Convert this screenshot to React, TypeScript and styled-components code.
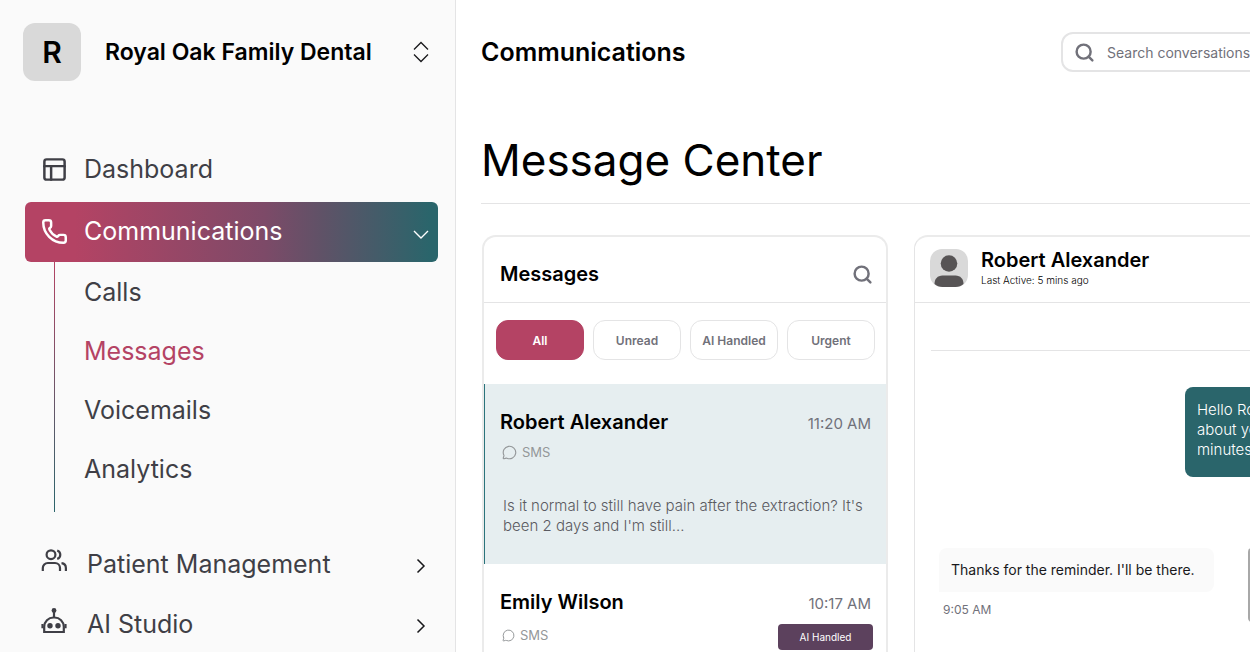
import React from "react";
import styled, { createGlobalStyle } from "styled-components";
import { MessageCircle, PanelsTopLeft, Phone, Search } from "lucide-react";

const color = {
  rose: "#b44364",
  teal: "#2a656b",
  plum: "#5c415d",
  ink: "#3f3f46",
  muted: "#71717a",
  line: "#e4e4e5",
  edge: "#ebebeb",
};

const GlobalStyle = createGlobalStyle`
  *, *::before, *::after { box-sizing: border-box; }
  body {
    margin: 0;
    background: #fff;
    color: #000;
    font-family: Inter, "Liberation Sans", sans-serif;
  }
  h1, h2, h3, p, ul { margin: 0; padding: 0; }
  ul { list-style: none; }
  button { font-family: inherit; cursor: pointer; }
  a { color: inherit; text-decoration: none; }
  svg { display: block; flex: none; }
`;

const Shell = styled.div`
  display: flex;
  height: 100vh;
  overflow: hidden;
`;

/* Sidebar */

const Sidebar = styled.aside`
  flex: none;
  width: 456px;
  background: #fafafa;
  border-right: 1px solid ${color.line};
`;

const Practice = styled.button`
  display: flex;
  align-items: center;
  width: 100%;
  padding: 23px 26px 0 23px;
  border: 0;
  background: none;
  color: #000;
  text-align: left;
`;

const Initial = styled.span`
  display: grid;
  place-items: center;
  width: 58px;
  height: 58px;
  border-radius: 12px;
  background: #d9d9d9;
  font-size: 30px;
  font-weight: 600;
`;

const PracticeName = styled.span`
  flex: 1;
  margin-left: 24px;
  font-size: 23px;
  font-weight: 600;
  white-space: nowrap;
`;

const Nav = styled.nav`
  padding: 58px 17px 0 25px;
`;

const NavItem = styled.a<{ $active?: boolean }>`
  display: flex;
  align-items: center;
  gap: 16px;
  height: 60px;
  padding: 0 9px 0 16px;
  padding-bottom: ${(p) => (p.$active ? "2px" : 0)};
  margin-bottom: ${(p) => (p.$active ? 0 : "3px")};
  border-radius: 6px;
  color: ${(p) => (p.$active ? "#fff" : color.ink)};
  background: ${(p) =>
    p.$active
      ? `linear-gradient(90deg, ${color.rose} 12%, #7d4a68 58%, #5f5267 72%, ${color.teal} 98%)`
      : "none"};
  font-size: 25px;
`;

const NavLabel = styled.span`
  flex: 1;
  white-space: nowrap;
`;

const SubList = styled.ul`
  margin: 0 0 22px 29px;
  padding: 0 0 14px 29px;
  border-left: 1px solid;
  border-image: linear-gradient(${color.rose}, ${color.teal}) 1;
`;

const SubLink = styled.a<{ $active?: boolean }>`
  display: flex;
  align-items: center;
  height: 59px;
  font-size: 25px;
  color: ${(p) => (p.$active ? color.rose : color.ink)};
`;

const NavGroup = styled.div`
  display: flex;
  flex-direction: column;
`;

const GroupItem = styled(NavItem)`
  gap: 20px;
  margin-bottom: 0;
`;

/* Main area */

const Main = styled.main`
  flex: 1;
  min-width: 0;
  overflow: hidden;
`;

const Workspace = styled.div`
  width: calc(100% + 200px);
  min-height: 100%;
  display: flex;
  flex-direction: column;
  padding: 32px 24px 0 25px;
`;

const TopBar = styled.header`
  display: flex;
  align-items: center;
  justify-content: space-between;
  height: 40px;
`;

const Section = styled.h2`
  font-size: 25px;
  font-weight: 600;
`;

const SearchBox = styled.label`
  display: flex;
  align-items: center;
  gap: 12px;
  width: 365px;
  height: 40px;
  padding: 0 11px;
  border: 2px solid ${color.line};
  border-radius: 12px;
  color: ${color.muted};
`;

const SearchInput = styled.input`
  flex: 1;
  min-width: 0;
  padding: 0;
  border: 0;
  outline: 0;
  background: none;
  font-family: inherit;
  font-size: 14px;
  color: ${color.ink};
  &::placeholder { color: ${color.muted}; opacity: 1; }
`;

const PageTitle = styled.h1`
  margin-top: 59px;
  padding-bottom: 14px;
  border-bottom: 1px solid ${color.line};
  font-size: 44px;
  line-height: 58px;
  font-weight: 400;
`;

const Columns = styled.div`
  flex: 1;
  display: grid;
  grid-template-columns: 406px minmax(0, 1fr);
  gap: 26px;
  margin-top: 31px;
  padding-left: 1px;
`;

const Card = styled.section`
  border: 2px solid ${color.edge};
  border-bottom: 0;
  border-radius: 14px 14px 0 0;
`;

const ThreadCard = styled(Card)`
  border-left: 1px solid ${color.line};
`;

const CardHeader = styled.header`
  display: flex;
  align-items: center;
  height: 66px;
  padding: 0 13px 0 16px;
  border-bottom: 1px solid ${color.line};
`;

const ContactHeader = styled(CardHeader)`
  padding: 0 15px 3px;
`;

const CardTitle = styled.h2`
  flex: 1;
  margin-top: 9px;
  font-size: 20px;
  line-height: 24px;
  font-weight: 600;
`;

const IconButton = styled.button`
  margin-top: 9px;
  padding: 0;
  border: 0;
  background: none;
  color: ${color.muted};
`;

const Filters = styled.div`
  display: flex;
  gap: 9px;
  padding: 17px 11px 24px 12px;
`;

const Chip = styled.button<{ $active?: boolean }>`
  flex: 1 1 0;
  height: 40px;
  padding: 0;
  border: 1px solid ${(p) => (p.$active ? color.rose : color.line)};
  border-radius: 12px;
  background: ${(p) => (p.$active ? color.rose : "#fff")};
  color: ${(p) => (p.$active ? "#fff" : color.muted)};
  font-size: 12px;
  font-weight: 600;
  white-space: nowrap;
`;

const Conversation = styled.li<{ $active?: boolean }>`
  height: 180px;
  padding: 26px 15px 0;
  border-left: 1px solid ${(p) => (p.$active ? "#2a737b" : "transparent")};
  background: ${(p) => (p.$active ? "#e6eef0" : "#fff")};
`;

const Row = styled.div`
  display: flex;
  justify-content: space-between;
`;

const TagRow = styled(Row)`
  align-items: flex-start;
  margin-top: 6px;
`;

const Person = styled.h3`
  font-size: 20px;
  line-height: 24px;
  font-weight: 600;
`;

const Time = styled.time`
  font-size: 15px;
  line-height: 28px;
  color: ${color.muted};
`;

const Channel = styled.span<{ $compact?: boolean }>`
  display: flex;
  align-items: center;
  gap: 5px;
  height: ${(p) => (p.$compact ? "22px" : "28px")};
  padding-left: 2px;
  font-size: 13px;
  color: #949799;
`;

const Badge = styled.span`
  display: grid;
  place-items: center;
  width: 95px;
  height: 26px;
  margin-right: -2px;
  border-radius: 4px;
  background: ${color.plum};
  color: #fff;
  font-size: 10px;
`;

const Preview = styled.p`
  margin-top: 30px;
  padding-left: 3px;
  font-size: 15px;
  line-height: 20px;
  font-weight: 300;
  color: #5a5a61;
  white-space: pre-line;
`;

/* Thread */

const Contact = styled.div`
  display: flex;
  flex-direction: column;
  margin-left: 13px;
`;

const Activity = styled.span`
  font-size: 10px;
  line-height: 16px;
  font-weight: 300;
  color: #000;
`;

const Thread = styled.div`
  display: flex;
  flex-direction: column;
  margin: 47px 16px 0;
  padding: 36px 0 0 8px;
  border-top: 1px solid ${color.line};
`;

const Sent = styled.p`
  align-self: flex-end;
  width: 223px;
  height: 90px;
  padding: 13px 12px;
  border-radius: 8px;
  background: ${color.teal};
  color: #fff;
  font-size: 15px;
  line-height: 20px;
  font-weight: 300;
  white-space: pre;
`;

const ReceivedRow = styled.div`
  display: flex;
  align-items: flex-start;
  gap: 34px;
  margin-top: 71px;
`;

const Received = styled.div`
  width: 275px;
`;

const ReceivedText = styled.p`
  padding: 12px;
  border-radius: 8px 8px 8px 0;
  background: #fafafa;
  color: #18181b;
  font-size: 14px;
  line-height: 20px;
  white-space: nowrap;
`;

const SentAt = styled.time`
  display: block;
  padding: 8px 4px;
  font-size: 12px;
  line-height: 20px;
  color: ${color.muted};
`;

const ScrollThumb = styled.div`
  width: 8px;
  height: 74px;
  border-radius: 4px;
  background: #a8a8a8;
`;

const Selector = () => (
  <svg width="16" height="22" viewBox="0 0 16 22" fill="none" stroke="#18181b" strokeWidth="1.3">
    <path d="M1 8.500L8 1.500L15 8.500M1 13.500L8 20.500L15 13.500" />
  </svg>
);

const ChevronRight = () => (
  <svg width="16" height="20" viewBox="0 0 16 20" fill="none" stroke="#18181b" strokeWidth="1.5">
    <path d="M4.500 5.500L11 12L4.500 18.500" />
  </svg>
);

const ChevronDown = () => (
  <svg width="16" height="16" viewBox="0 0 16 16" fill="none" stroke="#fff" strokeWidth="1.4">
    <path d="M1 8L8 15L15 8" />
  </svg>
);

const People = () => (
  <svg width="26" height="32" viewBox="0 0 26 32" fill="none" stroke="currentColor" strokeWidth="2.2">
    <circle cx="10" cy="6.700" r="4.400" />
    <path d="M1.800 23v-3a5 5 0 0 1 5-5h7.200a5 5 0 0 1 5 5V23" />
    <path d="M16.200 2.500a4.400 4.400 0 0 1 0 8.400M20.500 15.200a5 5 0 0 1 4.400 4.900V23" />
  </svg>
);

const Robot = () => (
  <svg width="26" height="32" viewBox="0 0 26 32" fill="none" stroke="currentColor" strokeWidth="2.2">
    <path d="M3.200 24v-5.200a9.300 9.300 0 0 1 9.300-9.300h1a9.300 9.300 0 0 1 9.300 9.300V24z" />
    <path d="M13 9V3M1.500 16v4.200M24.500 16v4.200" />
    <circle cx="13" cy="2.500" r="2.400" fill="currentColor" stroke="none" />
    <circle cx="9" cy="17.700" r="2.700" fill="currentColor" stroke="none" />
    <circle cx="17" cy="17.700" r="2.700" fill="currentColor" stroke="none" />
  </svg>
);

const Avatar = () => (
  <svg width="38" height="38" viewBox="0 0 38 38" role="img" aria-label="Robert Alexander">
    <rect width="38" height="38" rx="12" fill="#d9d9d9" />
    <circle cx="19" cy="14.500" r="8.300" fill="#575455" />
    <path d="M4.500 35c0-5 3-8.500 8-8.500h13c5 0 8 3.500 8 8.500-2 2-5 3-8 3h-13c-3 0-6-1-8-3z" fill="#575455" />
  </svg>
);

const subPages = ["Calls", "Messages", "Voicemails", "Analytics"];
const filters = ["All", "Unread", "AI Handled", "Urgent"];

export default function App() {
  return (
    <Shell>
      <GlobalStyle />
      <Sidebar>
        <Practice type="button">
          <Initial>R</Initial>
          <PracticeName>Royal Oak Family Dental</PracticeName>
          <Selector />
        </Practice>
        <Nav>
          <NavItem href="#dashboard">
            <PanelsTopLeft size={27} strokeWidth={2.2} />
            <NavLabel>Dashboard</NavLabel>
          </NavItem>
          <NavItem href="#communications" $active>
            <Phone size={27} strokeWidth={2.2} />
            <NavLabel>Communications</NavLabel>
            <ChevronDown />
          </NavItem>
          <SubList>
            {subPages.map((name) => (
              <li key={name}>
                <SubLink href={`#${name.toLowerCase()}`} $active={name === "Messages"}>
                  {name}
                </SubLink>
              </li>
            ))}
          </SubList>
          <NavGroup>
            <GroupItem href="#patients">
              <People />
              <NavLabel>Patient Management</NavLabel>
              <ChevronRight />
            </GroupItem>
            <GroupItem href="#ai-studio">
              <Robot />
              <NavLabel>AI Studio</NavLabel>
              <ChevronRight />
            </GroupItem>
          </NavGroup>
        </Nav>
      </Sidebar>

      <Main>
        <Workspace>
          <TopBar>
            <Section>Communications</Section>
            <SearchBox>
              <Search size={21} strokeWidth={2.8} />
              <SearchInput type="search" aria-label="Search conversations" placeholder="Search conversations" />
            </SearchBox>
          </TopBar>
          <PageTitle>Message Center</PageTitle>
          <Columns>
            <Card>
              <CardHeader>
                <CardTitle>Messages</CardTitle>
                <IconButton type="button" aria-label="Search messages">
                  <Search size={21} strokeWidth={2.8} />
                </IconButton>
              </CardHeader>
              <Filters>
                {filters.map((name) => (
                  <Chip key={name} type="button" $active={name === "All"}>
                    {name}
                  </Chip>
                ))}
              </Filters>
              <ul>
                <Conversation $active>
                  <Row>
                    <Person>Robert Alexander</Person>
                    <Time>11:20 AM</Time>
                  </Row>
                  <Channel>
                    <MessageCircle size={15} strokeWidth={1.8} />
                    SMS
                  </Channel>
                  <Preview>{"Is it normal to still have pain after the extraction? It's\nbeen 2 days and I'm still..."}</Preview>
                </Conversation>
                <Conversation>
                  <Row>
                    <Person>Emily Wilson</Person>
                    <Time>10:17 AM</Time>
                  </Row>
                  <TagRow>
                    <Channel $compact>
                      <MessageCircle size={13} strokeWidth={1.8} />
                      SMS
                    </Channel>
                    <Badge>AI Handled</Badge>
                  </TagRow>
                </Conversation>
              </ul>
            </Card>

            <ThreadCard>
              <ContactHeader>
                <Avatar />
                <Contact>
                  <Person>Robert Alexander</Person>
                  <Activity>Last Active: 5 mins ago</Activity>
                </Contact>
              </ContactHeader>
              <Thread>
                <Sent>{"Hello Robert,\nabout your\nminutes"}</Sent>
                <ReceivedRow>
                  <Received>
                    <ReceivedText>Thanks for the reminder. I'll be there.</ReceivedText>
                    <SentAt>9:05 AM</SentAt>
                  </Received>
                  <ScrollThumb />
                </ReceivedRow>
              </Thread>
            </ThreadCard>
          </Columns>
        </Workspace>
      </Main>
    </Shell>
  );
}
